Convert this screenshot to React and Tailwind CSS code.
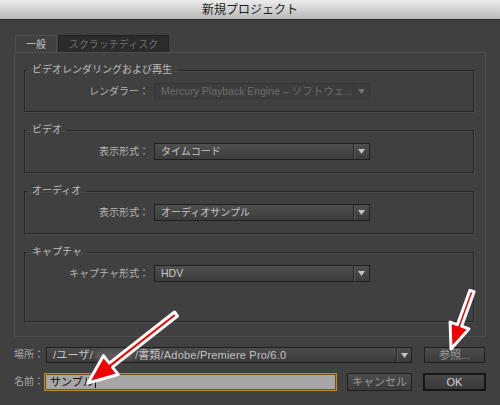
import React from 'react';

const FONT = "font-['Liberation_Sans','Noto_Sans_CJK_JP',sans-serif]";

// polygon for an arrow with a white outline (computed from tail/tip)
function arrowPoints([tx, ty], [hx, hy], shaft, headLen, headHalf) {
  const dx = hx - tx;
  const dy = hy - ty;
  const len = Math.hypot(dx, dy);
  const ux = dx / len;
  const uy = dy / len;
  const nx = -uy;
  const ny = ux;
  const bx = hx - ux * headLen;
  const by = hy - uy * headLen;
  const p = (x, y) => `${x.toFixed(1)},${y.toFixed(1)}`;
  return [
    p(tx + nx * shaft, ty + ny * shaft),
    p(bx + nx * shaft, by + ny * shaft),
    p(bx + nx * headHalf, by + ny * headHalf),
    p(hx, hy),
    p(bx - nx * headHalf, by - ny * headHalf),
    p(bx - nx * shaft, by - ny * shaft),
    p(tx - nx * shaft, ty - ny * shaft),
  ].join(' ');
}

const Caret = () => (
  <svg width="7" height="5" viewBox="0 0 7 5">
    <path d="M0 0 H7 L3.5 5 Z" fill="#c4c4c4" />
  </svg>
);

const Select = ({ value, disabled, h = 'h-[17px]', text = 'text-[10px]' }) => (
  <div
    className={`flex w-[216px] ${h} items-stretch border ${
      disabled
        ? 'border-[#353535] bg-[#3d3d3d] text-[#6c6c6c]'
        : 'border-[#1f1f1f] bg-gradient-to-b from-[#4f4f4f] to-[#3c3c3c] text-[#c6c6c6]'
    }`}
  >
    <span className={`flex-1 truncate pl-[6px] ${text} leading-[15px]`}>{value}</span>
    <span
      className={`flex w-[16px] items-center justify-center border-l ${
        disabled ? 'border-[#2e2e2e] opacity-40' : 'border-[#262626] shadow-[inset_1px_0_0_#585858]'
      }`}
    >
      <Caret />
    </span>
  </div>
);

const Group = ({ title, className = '', children }) => (
  <fieldset
    className={`border border-[#262626] pt-[6px] shadow-[1px_1px_0_#4a4a4a,inset_1px_1px_0_#4a4a4a] ${className}`}
  >
    <legend className="ml-[2px] px-[5px] text-[10px] leading-[14px] text-[#bdbdbd]">{title}</legend>
    {children}
  </fieldset>
);

const Row = ({ label, children }) => (
  <div className="flex items-center gap-[5px]">
    <span className="w-[124px] text-right text-[10px] text-[#b4b4b4]">{label}</span>
    {children}
  </div>
);

const Button = ({ children, primary, className = '' }) => (
  <button
    className={`flex items-center justify-center text-[11px] ${
      primary
        ? 'border-2 border-[#161616] bg-gradient-to-b from-[#474747] to-[#393939] text-[#d2d2d2]'
        : 'border border-[#1f1f1f] bg-gradient-to-b from-[#4c4c4c] to-[#3b3b3b] text-[#9a9a9a]'
    } ${className}`}
  >
    {children}
  </button>
);

export default function App() {
  return (
    <div className={`relative flex h-[405px] w-[500px] flex-col overflow-hidden bg-[#404040] ${FONT}`}>
      {/* title bar */}
      <div className="flex h-[20px] items-center justify-center border-b border-[#2a2a2a] bg-gradient-to-b from-[#ececec] to-[#b9b9b9] text-[12px] text-[#1e1e1e]">
        新規プロジェクト
      </div>

      <div className="px-[14px]">
        {/* tabs */}
        <div className="mt-[15px] flex h-[17px] items-stretch pl-px">
          <div className="flex w-[42px] items-center justify-center border border-b-0 border-[#4e4e4e] text-[10px] text-[#c8c8c8]">
            一般
          </div>
          <div className="ml-px flex w-[111px] items-center justify-center border border-b-0 border-[#222] bg-[#2b2b2b] text-[10px] text-[#6e6e6e]">
            スクラッチディスク
          </div>
        </div>

        {/* tab panel */}
        <div className="flex h-[285px] flex-col border border-[#4e4e4e] pl-[9px] pr-[11px] pt-[10px]">
          <Group title="ビデオレンダリングおよび再生" className="pb-[12px]">
            <Row label="レンダラー：">
              <Select
                value="Mercury Playback Engine – ソフトウェ..."
                disabled
                h="h-[16px]"
                text="text-[10.5px]"
              />
            </Row>
          </Group>
          <Group title="ビデオ" className="mt-[11px] pb-[12px]">
            <Row label="表示形式：">
              <Select value="タイムコード" />
            </Row>
          </Group>
          <Group title="オーディオ" className="mt-[11px] pb-[12px]">
            <Row label="表示形式：">
              <Select value="オーディオサンプル" />
            </Row>
          </Group>
          <Group title="キャプチャ" className="mt-[11px] pb-[39px]">
            <Row label="キャプチャ形式：">
              <Select value="HDV" text="text-[10.5px]" />
            </Row>
          </Group>
        </div>

        {/* location */}
        <div className="mt-[10px] flex h-[16px] items-stretch">
          <span className="w-[32px] text-[10px] leading-[16px] text-[#a8a8a8]">場所：</span>
          <div className="flex w-[366px] items-stretch border border-[#1f1f1f] bg-gradient-to-b from-[#4d4d4d] to-[#3b3b3b] text-[#c2c2c2]">
            <span className="flex flex-1 items-center truncate pl-[6px] text-[11px] tracking-[0.2px]">
              /ユーザ/
              <span className="mx-[2px] inline-block h-[9px] w-[38px] rounded-sm bg-[#5b5b5b] blur-[2px]" />
              /書類/Adobe/Premiere Pro/6.0
            </span>
            <span className="flex w-[15px] items-center justify-center border-l border-[#262626] shadow-[inset_1px_0_0_#585858]">
              <Caret />
            </span>
          </div>
          <Button className="ml-[12px] w-[61px]">参照...</Button>
        </div>

        {/* name */}
        <div className="mt-[10px] flex h-[18px] items-stretch">
          <span className="w-[30px] text-[10px] leading-[18px] text-[#a8a8a8]">名前：</span>
          <div className="flex w-[293px] items-center border border-[#c38d1d] bg-[#a6a6a6] pl-[5px] shadow-[inset_0_0_0_1px_#6e5418] text-[11px] text-[#111]">
            サンプル
            <span className="ml-px h-[12px] w-px bg-[#111]" />
          </div>
          <Button className="ml-[10px] w-[65px]">キャンセル</Button>
          <Button primary className="ml-[11px] w-[63px]">OK</Button>
        </div>
      </div>

      {/* annotation arrows */}
      <svg className="pointer-events-none absolute inset-0" width="500" height="405" viewBox="0 0 500 405">
        <polygon
          points={arrowPoints([176, 314], [88, 383], 2.5, 29, 12)}
          fill="#f00000"
          stroke="#fff"
          strokeWidth="3"
          strokeLinejoin="round"
        />
        <polygon
          points={arrowPoints([472, 291], [451, 349], 2.2, 25, 10)}
          fill="#f00000"
          stroke="#fff"
          strokeWidth="3"
          strokeLinejoin="round"
        />
      </svg>
    </div>
  );
}
